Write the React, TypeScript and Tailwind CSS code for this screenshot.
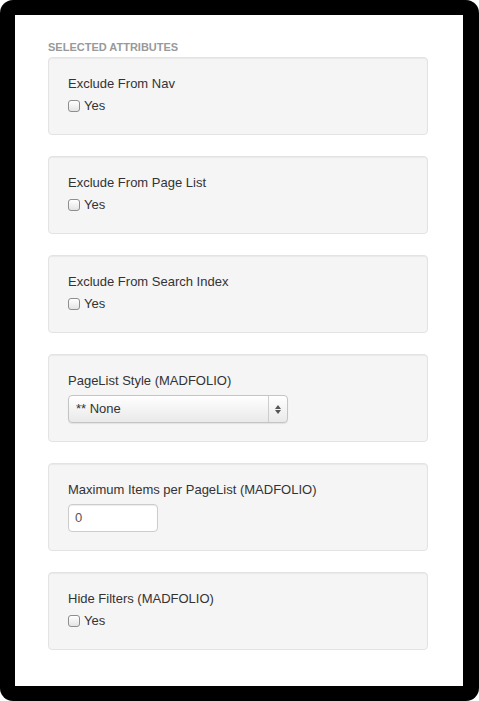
const Checkbox = () => (
  <span className="inline-block w-[12px] h-[12px] rounded-[3px] border border-[#8e8e8e] bg-gradient-to-b from-white to-[#e4e4e4] shadow-[inset_0_1px_0_rgba(255,255,255,0.8)]" />
)

const Well = ({ children }: { children: React.ReactNode }) => (
  <div className="rounded-[4px] border border-[#e3e3e3] bg-[#f5f5f5] shadow-[inset_0_1px_1px_rgba(0,0,0,0.05)] px-[19px] pt-[17px]">
    {children}
  </div>
)

const CheckField = ({ label }: { label: string }) => (
  <Well>
    <div className="h-[18px] leading-[18px] text-[13px] text-[#333]">{label}</div>
    <div className="mt-[3px] mb-[18px] h-[20px] flex items-center gap-[4px]">
      <Checkbox />
      <span className="text-[13px] text-[#333] leading-[20px]">Yes</span>
    </div>
  </Well>
)

export default function App() {
  return (
    <div className="w-[479px] h-[701px] bg-white" style={{ fontFamily: '"Liberation Sans", Arial, sans-serif' }}>
      <div className="w-full h-full bg-black rounded-[13px] pt-[15px] pl-[15px] pr-[16px] pb-[15px]">
        <div className="w-full h-full bg-white pl-[33px] pr-[35px] pt-[24px]">
          <div className="h-[16px] leading-[16px] text-[11px] font-bold text-[#999] uppercase mb-[2px]">
            Selected Attributes
          </div>
          <div className="flex flex-col gap-[21px]">
            <CheckField label="Exclude From Nav" />
            <CheckField label="Exclude From Page List" />
            <CheckField label="Exclude From Search Index" />
            <Well>
              <div className="h-[18px] leading-[18px] text-[13px] text-[#333]">PageList Style (MADFOLIO)</div>
              <div className="mt-[5px] mb-[18px] w-[220px] h-[28px] flex rounded-[4px] border border-[#c4c4c4] bg-gradient-to-b from-white to-[#e9e9e9] shadow-[0_1px_1px_rgba(0,0,0,0.08)]">
                <span className="flex-1 pl-[7px] text-[13px] leading-[26px] text-[#333]">** None</span>
                <span className="w-[19px] border-l border-[#cdcdcd] flex flex-col items-center justify-center gap-[1px]">
                  <svg width="6" height="4" viewBox="0 0 6 4"><path d="M3 0L6 4H0z" fill="#555" /></svg>
                  <svg width="6" height="4" viewBox="0 0 6 4"><path d="M0 0H6L3 4z" fill="#555" /></svg>
                </span>
              </div>
            </Well>
            <Well>
              <div className="h-[18px] leading-[18px] text-[13px] text-[#333]">Maximum Items per PageList (MADFOLIO)</div>
              <div className="mt-[5px] mb-[18px] w-[90px] h-[28px] rounded-[4px] border border-[#ccc] bg-white shadow-[inset_0_1px_1px_rgba(0,0,0,0.075)] pl-[6px] text-[13px] leading-[26px] text-[#555]">
                0
              </div>
            </Well>
            <CheckField label="Hide Filters (MADFOLIO)" />
          </div>
        </div>
      </div>
    </div>
  )
}
